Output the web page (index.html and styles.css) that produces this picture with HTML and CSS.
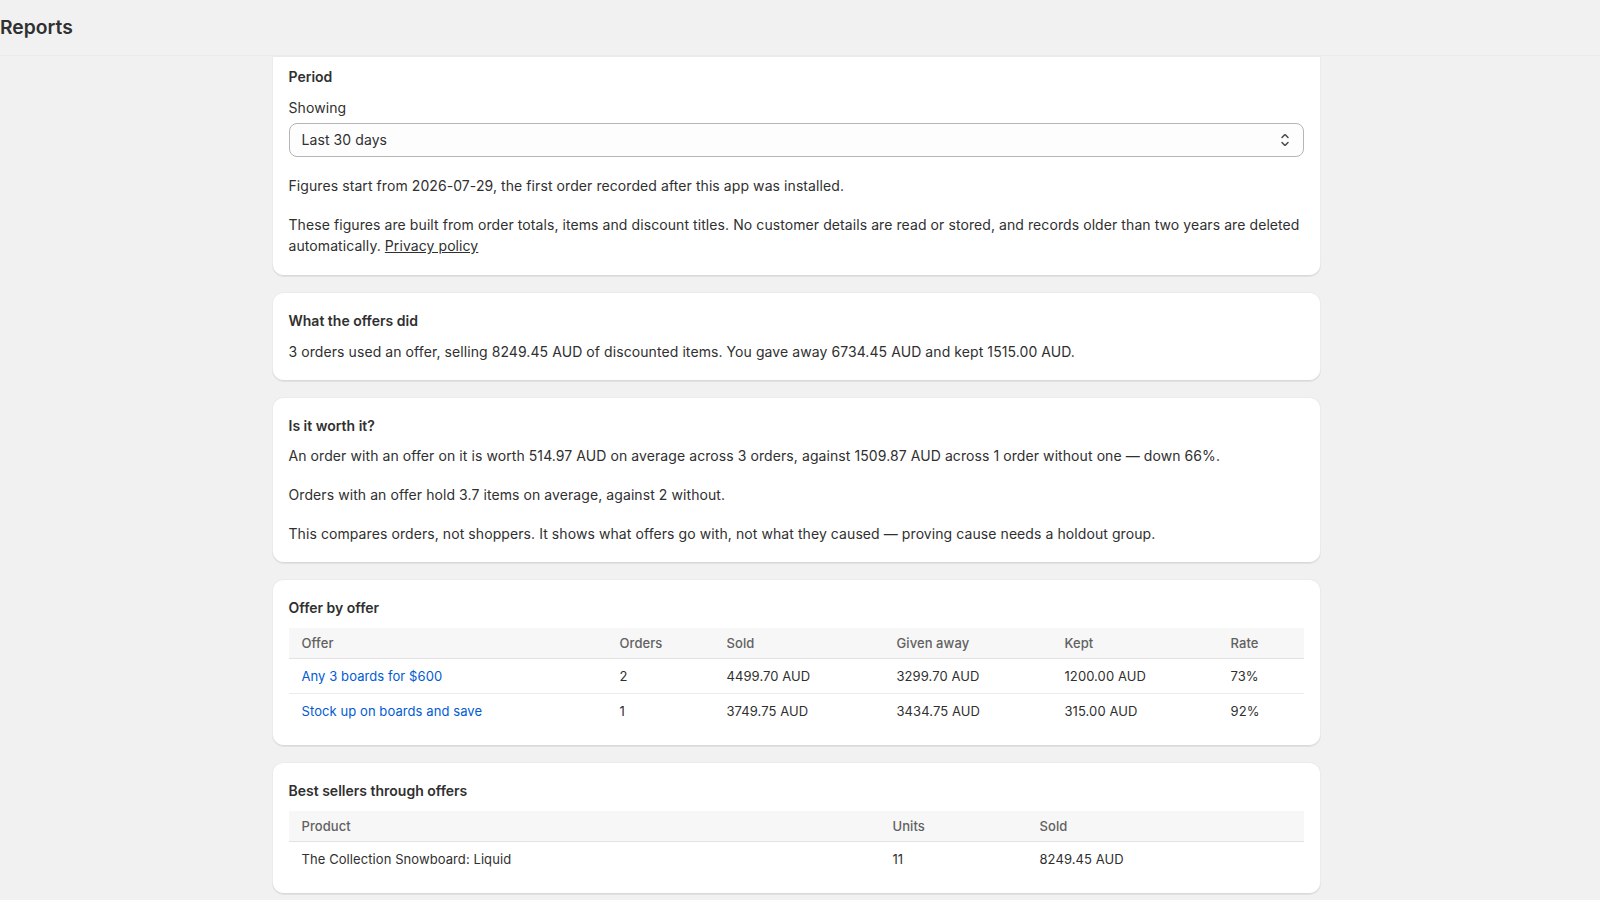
FILE: index.html
```html
<!DOCTYPE html>
<html lang="en">
<head>
    <meta charset="UTF-8">
    <meta name="viewport" content="width=device-width, initial-scale=1.0">
    <title>Reports</title>
    <link rel="stylesheet" href="styles.css">
</head>
<body>
    <div class="top-bar">Reports</div>

    <div class="page">
        <!-- Period -->
        <div class="card card-clipped">
            <h2 class="card-title">Period</h2>
            <label class="field-label">Showing</label>
            <div class="select">
                <span>Last 30 days</span>
                <svg class="select-icon" viewBox="0 0 20 20" width="20" height="20">
                    <path d="M10.884 4.323a1.25 1.25 0 0 0-1.768 0l-2.646 2.647a.75.75 0 0 0 1.06 1.06l2.47-2.47 2.47 2.47a.75.75 0 1 0 1.06-1.06l-2.646-2.647Z"/>
                    <path d="m13.53 13.03-2.646 2.647a1.25 1.25 0 0 1-1.768 0l-2.646-2.647a.75.75 0 0 1 1.06-1.06l2.47 2.47 2.47-2.47a.75.75 0 0 1 1.06 1.06Z"/>
                </svg>
            </div>
            <p class="text">Figures start from 2026-07-29, the first order recorded after this app was installed.</p>
            <p class="text">These figures are built from order totals, items and discount titles. No customer details are read or stored, and records older than two years are deleted automatically. <a href="#" class="plain-link">Privacy policy</a></p>
        </div>

        <!-- Summary -->
        <div class="card">
            <h2 class="card-title">What the offers did</h2>
            <p class="text">3 orders used an offer, selling 8249.45 AUD of discounted items. You gave away 6734.45 AUD and kept 1515.00 AUD.</p>
        </div>

        <!-- Worth it -->
        <div class="card">
            <h2 class="card-title">Is it worth it?</h2>
            <p class="text">An order with an offer on it is worth 514.97 AUD on average across 3 orders, against 1509.87 AUD across 1 order without one — down 66%.</p>
            <p class="text">Orders with an offer hold 3.7 items on average, against 2 without.</p>
            <p class="text">This compares orders, not shoppers. It shows what offers go with, not what they caused — proving cause needs a holdout group.</p>
        </div>

        <!-- Offer table -->
        <div class="card">
            <h2 class="card-title">Offer by offer</h2>
            <table class="data-table">
                <colgroup>
                    <col class="col-offer">
                    <col class="col-orders">
                    <col class="col-sold">
                    <col class="col-given">
                    <col class="col-kept">
                    <col>
                </colgroup>
                <thead>
                    <tr>
                        <th>Offer</th>
                        <th>Orders</th>
                        <th>Sold</th>
                        <th>Given away</th>
                        <th>Kept</th>
                        <th>Rate</th>
                    </tr>
                </thead>
                <tbody>
                    <tr>
                        <td><a href="#" class="link">Any 3 boards for $600</a></td>
                        <td>2</td>
                        <td>4499.70 AUD</td>
                        <td>3299.70 AUD</td>
                        <td>1200.00 AUD</td>
                        <td>73%</td>
                    </tr>
                    <tr>
                        <td><a href="#" class="link">Stock up on boards and save</a></td>
                        <td>1</td>
                        <td>3749.75 AUD</td>
                        <td>3434.75 AUD</td>
                        <td>315.00 AUD</td>
                        <td>92%</td>
                    </tr>
                </tbody>
            </table>
        </div>

        <!-- Best sellers -->
        <div class="card">
            <h2 class="card-title">Best sellers through offers</h2>
            <table class="data-table">
                <colgroup>
                    <col class="col-product">
                    <col class="col-units">
                    <col>
                </colgroup>
                <thead>
                    <tr>
                        <th>Product</th>
                        <th>Units</th>
                        <th>Sold</th>
                    </tr>
                </thead>
                <tbody>
                    <tr>
                        <td>The Collection Snowboard: Liquid</td>
                        <td>11</td>
                        <td>8249.45 AUD</td>
                    </tr>
                </tbody>
            </table>
        </div>
    </div>
</body>
</html>
```

FILE: styles.css
```css
body {
    font-family: Inter, "Noto Sans", sans-serif;
    font-size: 14px;
    line-height: 21.5px;
    letter-spacing: 0.08px;
    color: #303030;
    background-color: #f1f1f1;
    margin: 0;
    padding: 0;
    height: 900px;
    overflow: hidden;
}
.top-bar {
    height: 56px;
    display: flex;
    align-items: center;
    font-size: 19.3px;
    font-weight: 600;
    letter-spacing: 0;
    color: #303030;
    background-color: #f1f1f1;
    border-bottom: 1px solid #ebebeb;
    box-sizing: border-box;
}
.page {
    width: 1049px;
    margin: 0 auto;
    padding-right: 8px;
    display: flex;
    flex-direction: column;
    gap: 16px;
}
.card {
    background-color: white;
    border-radius: 12px;
    padding: 18px 17px 18.5px 17px;
    box-shadow: 0 1px 0 0 rgba(26, 26, 26, 0.07),
        inset 0 -1px 0 0 #d9d9d9,
        inset 1px 0 0 0 #ebebeb,
        inset -1px 0 0 0 #ebebeb,
        inset 0 1px 0 0 #ebebeb;
}
/* top of this card sits under the top bar */
.card-clipped {
    border-top-left-radius: 0;
    border-top-right-radius: 0;
    padding-top: 10px;
    padding-bottom: 19.5px;
}
.card-title {
    font-size: 14px;
    font-weight: 600;
    line-height: 21.5px;
    letter-spacing: 0;
    margin: 0 0 9px 0;
}
.field-label {
    display: block;
    margin-bottom: 5px;
}
.select {
    height: 34px;
    box-sizing: border-box;
    border: 1px solid #b5b5b5;
    border-radius: 8px;
    background-color: #fdfdfd;
    padding: 0 8px 0 12px;
    display: flex;
    align-items: center;
    justify-content: space-between;
    margin-bottom: 17.5px;
}
.select-icon {
    fill: #4a4a4a;
}
.text {
    margin: 0 0 17.5px 0;
}
.text:last-child {
    margin-bottom: 0;
}
.plain-link {
    color: #303030;
    text-decoration: underline;
}
.link {
    color: #005bd3;
    text-decoration: none;
}
.data-table {
    width: 100%;
    border-collapse: collapse;
    table-layout: fixed;
    font-size: 13px;
    line-height: 20px;
}
.data-table th {
    text-align: left;
    font-weight: 500;
    color: #616161;
    background-color: #f7f7f7;
    padding: 5px 12px 5px 13px;
    border-bottom: 1px solid #e3e3e3;
}
.data-table td {
    padding: 7px 12px 7px 13px;
    border-bottom: 1px solid #ebebeb;
}
.data-table tbody tr:last-child td {
    border-bottom: none;
}
.col-offer { width: 318px; }
.col-orders { width: 107px; }
.col-sold { width: 170px; }
.col-given { width: 168px; }
.col-kept { width: 166px; }
.col-product { width: 591px; }
.col-units { width: 147px; }
```
